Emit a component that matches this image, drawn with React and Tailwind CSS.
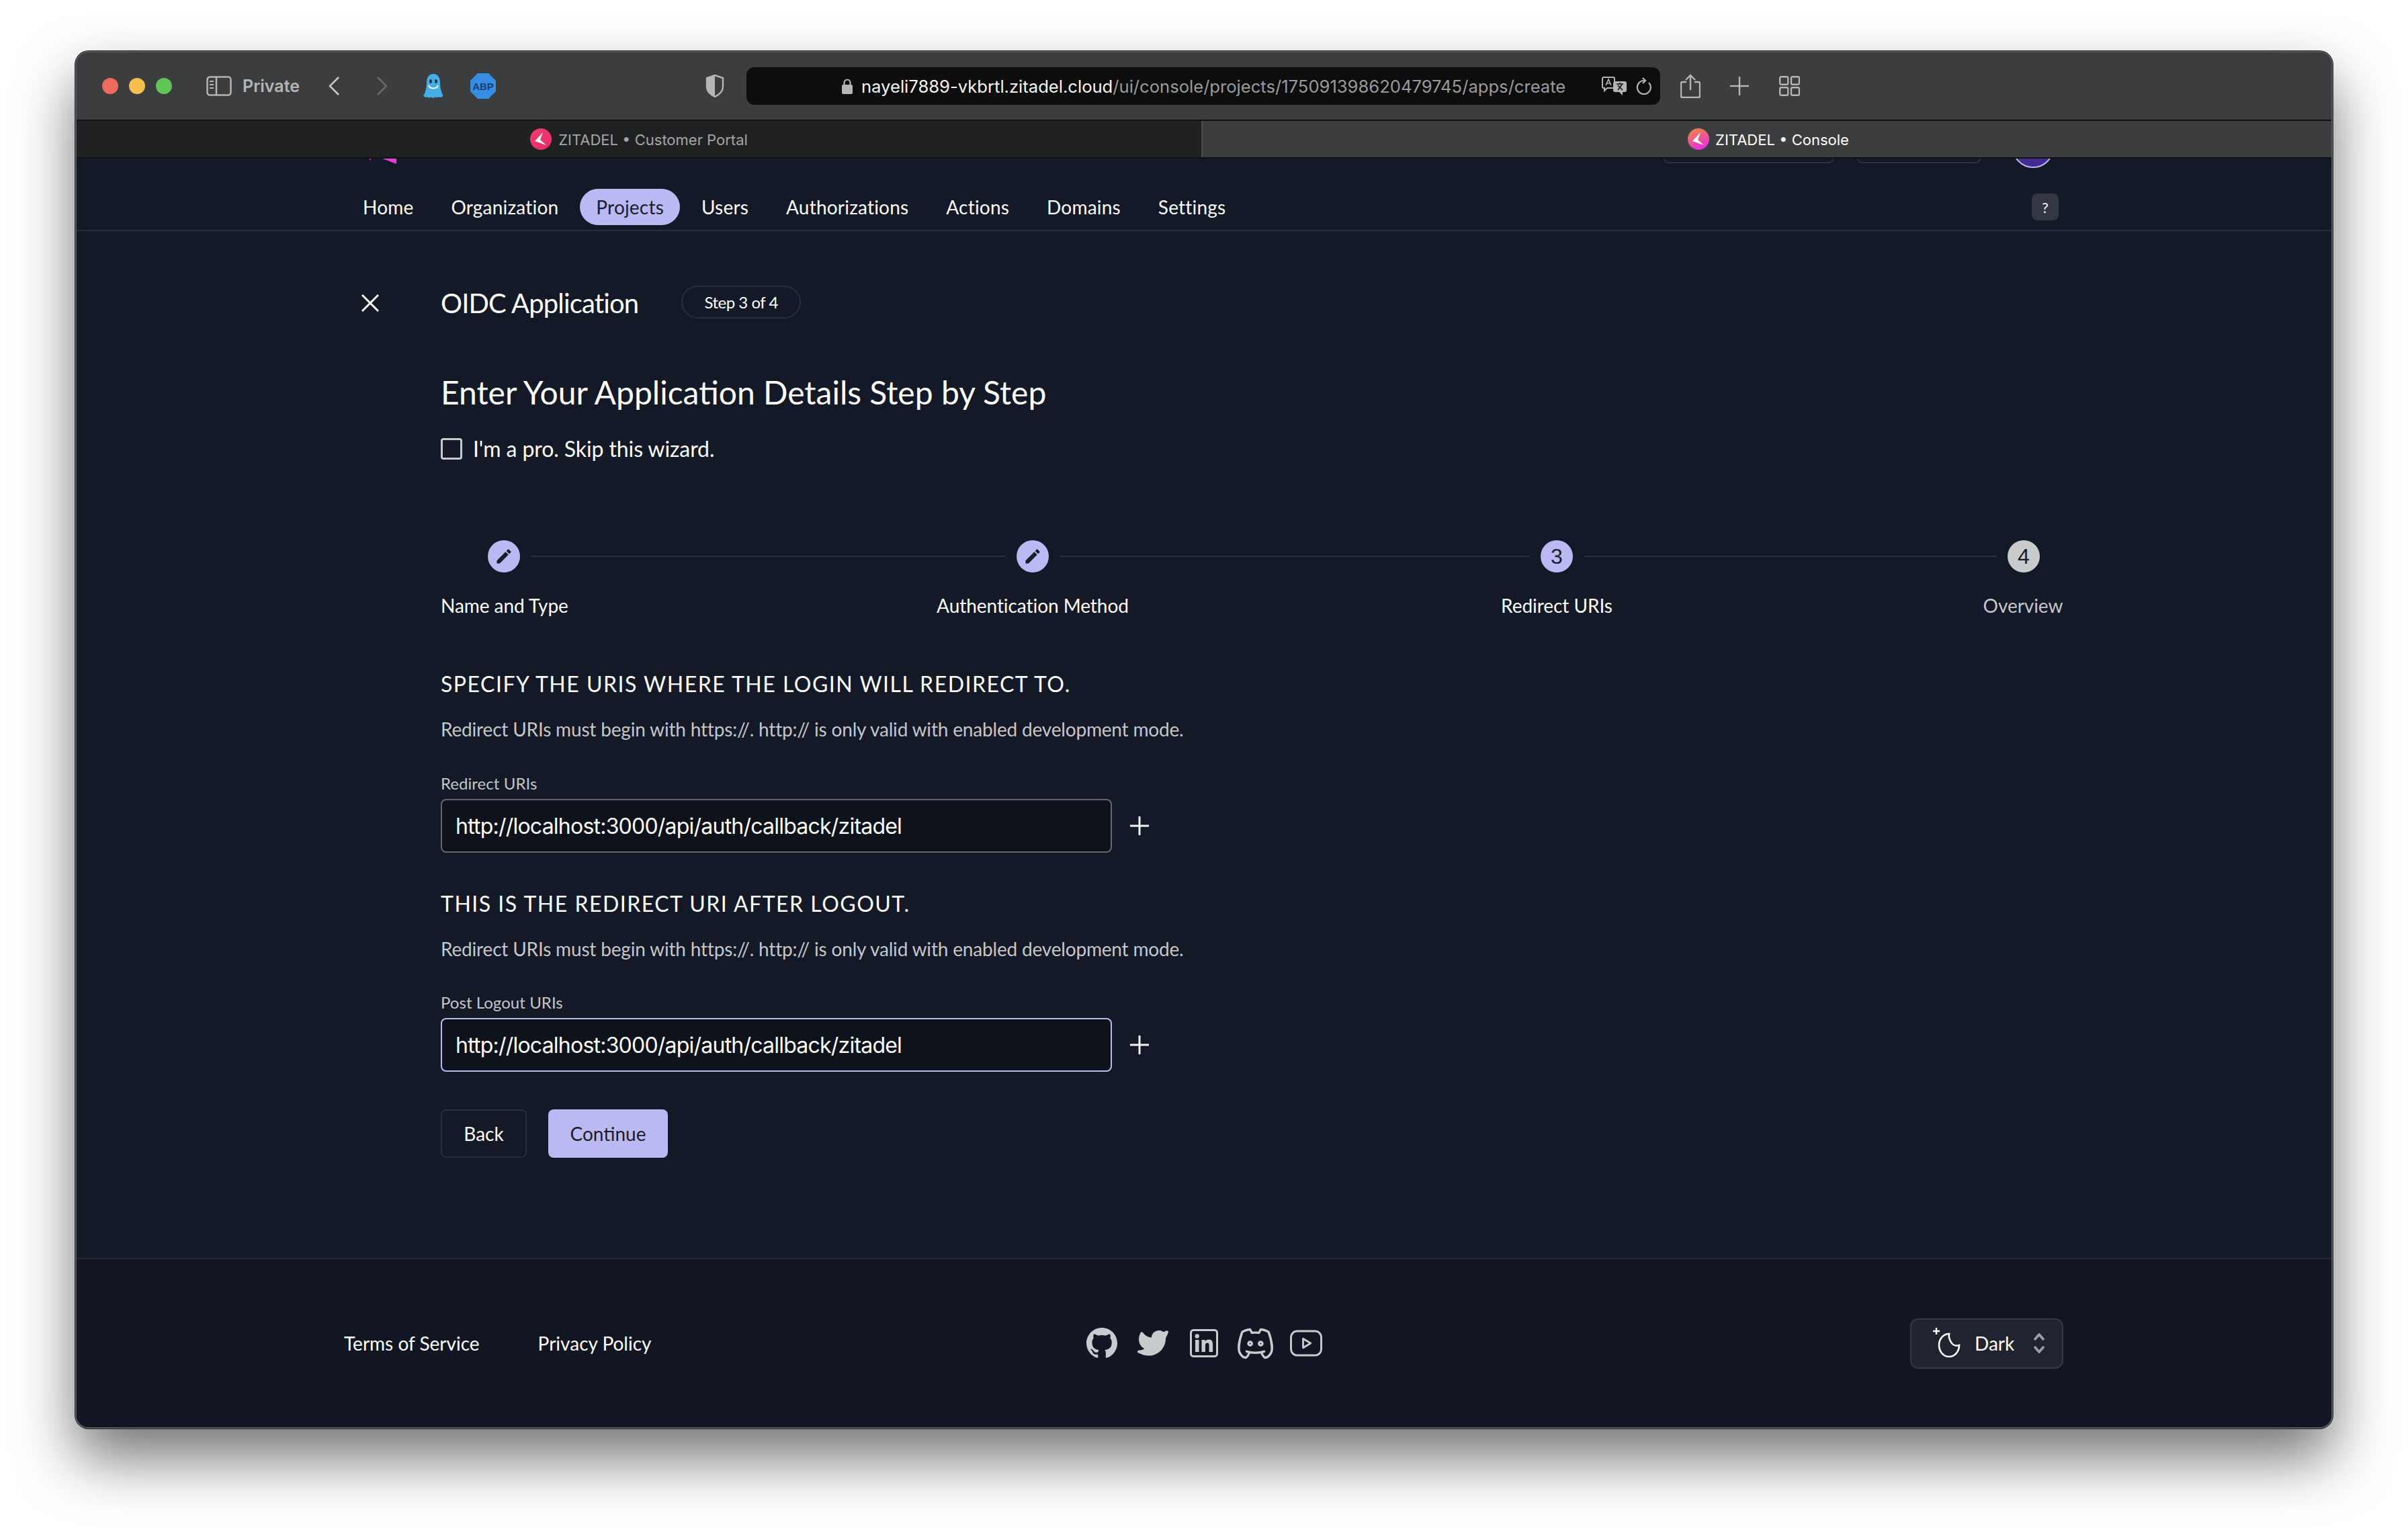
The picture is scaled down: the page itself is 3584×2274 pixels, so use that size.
import React from 'react';
import { TbBrandDiscord, TbBrandYoutube, TbBrandTwitterFilled } from 'react-icons/tb';
import { BsGithub } from 'react-icons/bs';

function ZLogo({ id, from, to }) {
  return (
    <svg width="32" height="32" viewBox="0 0 32 32" className="shrink-0">
      <defs>
        <linearGradient id={id} x1="0" y1="0" x2="0.4" y2="1">
          <stop offset="0" stopColor={from} />
          <stop offset="1" stopColor={to} />
        </linearGradient>
      </defs>
      <circle cx="16" cy="16" r="16" fill={`url(#${id})`} />
      <path d="M19 6 L7 19 L13 21 L24 25 L15 17 Z" fill="#fff" />
    </svg>
  );
}

function Pencil() {
  return (
    <svg width="28" height="28" viewBox="0 0 24 24" fill="#1b1e29">
      <path d="M3 17.25V21h3.75L17.81 9.94l-3.75-3.75L3 17.25zM20.71 7.04c.39-.39.39-1.02 0-1.41l-2.34-2.34c-.39-.39-1.02-.39-1.41 0l-1.83 1.83 3.75 3.75 1.83-1.83z" />
    </svg>
  );
}

function Circle({ children, muted }) {
  return (
    <div className={`w-12 h-12 shrink-0 rounded-full flex items-center justify-center text-[32px] leading-none text-[#1b1e29] font-['Liberation_Sans',sans-serif] ${muted ? 'bg-[#c9cacc]' : 'bg-[#bbb9f3]'}`}>
      {children}
    </div>
  );
}

function Plus() {
  return (
    <svg width="30" height="30" viewBox="0 0 30 30" className="ml-[26px] shrink-0" stroke="#f2f2f4" strokeWidth="3">
      <path d="M15 1v28M1 15h28" />
    </svg>
  );
}

function UriSection({ title, label, focused, titleMt, descMt, labelMt }) {
  return (
    <div>
      <h2 className={`text-[32px] leading-[40px] tracking-[1.5px] font-normal uppercase text-white ${titleMt}`}>{title}</h2>
      <p className={`text-[28px] leading-[36px] tracking-[-0.18px] text-[#c5c6c9] ${descMt}`}>
        Redirect URIs must begin with https://. http:// is only valid with enabled development mode.
      </p>
      <div className={`text-[24px] leading-[30px] tracking-[0.05px] text-[#c5c6c9] ${labelMt}`}>{label}</div>
      <div className="flex items-center mt-2">
        <div className={`w-[999px] h-[80px] rounded-lg border-2 bg-[#0e121b] flex items-center pl-[20px] pt-[2px] text-[32px] tracking-[-0.78px] text-white font-['Inter',sans-serif] ${focused ? 'border-[#bbb9f3]' : 'border-[#66676e]'}`}>
          http://localhost:3000/api/auth/callback/zitadel
        </div>
        <Plus />
      </div>
    </div>
  );
}

export default function App() {
  const nav = ['Home', 'Organization', 'Projects', 'Users', 'Authorizations', 'Actions', 'Domains', 'Settings'];
  return (
    <div className="w-[3584px] h-[2274px] bg-white pt-[76px] pl-[112px] overflow-hidden font-['Lato',sans-serif]">
      <div className="w-[3360px] h-[2050px] rounded-[20px] border-2 border-[#58595d] overflow-hidden flex flex-col bg-[#131927] shadow-[0_0_0_1px_#2a2a2c,0_44px_88px_rgba(0,0,0,0.55)]">
        {/* toolbar */}
        <div className="h-[102px] shrink-0 bg-[#3c3d3f] flex items-center border-b-2 border-b-[#111] font-['Inter',sans-serif]">
          <div className="flex gap-4 ml-[38px]">
            <span className="w-6 h-6 rounded-full bg-[#ed6a5f]" />
            <span className="w-6 h-6 rounded-full bg-[#f5bf4f]" />
            <span className="w-6 h-6 rounded-full bg-[#61c554]" />
          </div>
          <svg width="38" height="30" viewBox="0 0 38 30" fill="none" stroke="#b4b5b7" strokeWidth="2.5" className="ml-[51px]">
            <rect x="1.5" y="1.5" width="35" height="27" rx="4" />
            <path d="M15 1.5v27" />
            <path d="M5 8h6M5 13h6M5 18h6" strokeWidth="2" />
          </svg>
          <span className="ml-[16px] w-[89px] text-[25px] font-semibold text-[#b4b5b7] whitespace-nowrap mt-[2px]">Private</span>
          <svg width="18" height="30" viewBox="0 0 18 30" fill="none" stroke="#c4c5c7" strokeWidth="2.6" className="ml-[38px]">
            <path d="M16 2 3 15l13 13" />
          </svg>
          <svg width="18" height="30" viewBox="0 0 18 30" fill="none" stroke="#68696b" strokeWidth="2.6" className="ml-[54px]">
            <path d="M2 2l13 13L2 28" />
          </svg>
          <svg width="30" height="36" viewBox="0 0 30 36" className="ml-[52px]">
            <path d="M15 0C8 0 5 6 5 13c0 8-2 15-5 20 2 1 4 3 6 1 2 2 4 2 5 0 2 2 5 2 7 0 2 2 4 1 5 0 2 2 4 0 7-1-3-5-5-12-5-20C25 6 22 0 15 0z" fill="#44aee8" />
            <ellipse cx="11" cy="11" rx="1.8" ry="3" fill="#123" />
            <ellipse cx="19" cy="11" rx="1.8" ry="3" fill="#123" />
            <path d="M8 17c2 6 12 6 14 0" fill="none" stroke="#fff" strokeWidth="2" />
          </svg>
          <svg width="38" height="38" viewBox="0 0 38 38" className="ml-[40px]">
            <polygon points="11,0 27,0 38,11 38,27 27,38 11,38 0,27 0,11" fill="#378de4" />
            <text x="19" y="25" textAnchor="middle" fontSize="15" fontWeight="700" fill="#1c3f74" fontFamily="Liberation Sans">ABP</text>
          </svg>
          <svg width="28" height="34" viewBox="0 0 28 34" className="ml-[312px]">
            <path d="M14 1 2 5v13c0 7 6 12 12 15 6-3 12-8 12-15V5z" fill="none" stroke="#b4b5b7" strokeWidth="2.4" />
            <path d="M14 1 2 5v13c0 7 6 12 12 15z" fill="#b4b5b7" />
          </svg>
          <div className="ml-[33px] w-[1360px] h-[56px] rounded-[12px] bg-[#0d0d0e] flex items-center pl-[141px] shrink-0">
            <svg width="18" height="24" viewBox="0 0 18 24" className="shrink-0">
              <path d="M4.5 11V7a4.5 4.5 0 0 1 9 0v4" fill="none" stroke="#b4b5b7" strokeWidth="2.2" />
              <rect x="1" y="10" width="16" height="14" rx="2" fill="#b4b5b7" />
            </svg>
            <span className="ml-[12px] mt-[2px] text-[25.6px] text-[#f4f4f4] whitespace-nowrap">nayeli7889-vkbrtl.zitadel.cloud<span className="text-[#9a9b9d]">/ui/console/projects/175091398620479745/apps/create</span></span>
            <svg width="38" height="28" viewBox="0 0 38 28" className="ml-auto shrink-0">
              <path d="M3 1h14a2 2 0 0 1 2 2v12a2 2 0 0 1-2 2h-9l-4 4v-4H3a2 2 0 0 1-2-2V3a2 2 0 0 1 2-2z" fill="none" stroke="#b4b5b7" strokeWidth="2" />
              <rect x="17" y="7" width="20" height="16" rx="3" fill="#b4b5b7" />
              <path d="M31 23v5l-5-5z" fill="#b4b5b7" />
              <path d="M22 11h10M27 9v2M24 20l6-8M24 13l7 7" stroke="#111" strokeWidth="1.6" fill="none" />
              <path d="M6 13l4-9 4 9M7.5 10h5" stroke="#b4b5b7" strokeWidth="1.6" fill="none" />
            </svg>
            <svg width="24" height="26" viewBox="0 0 24 26" fill="none" stroke="#b4b5b7" strokeWidth="2.2" className="ml-[13px] mr-[12px] shrink-0">
              <path d="M19 8a10 10 0 1 1-7-3" />
              <path d="M10 1l4 4-4 4" />
            </svg>
          </div>
          <svg width="30" height="36" viewBox="0 0 30 36" fill="none" stroke="#b4b5b7" strokeWidth="2.4" className="ml-[30px]">
            <path d="M9 12H3a2 2 0 0 0-2 2v19a2 2 0 0 0 2 2h24a2 2 0 0 0 2-2V14a2 2 0 0 0-2-2h-6" />
            <path d="M15 24V2M8 9l7-7 7 7" />
          </svg>
          <svg width="28" height="28" viewBox="0 0 28 28" stroke="#b4b5b7" strokeWidth="2.4" className="ml-[44px]">
            <path d="M14 0v28M0 14h28" />
          </svg>
          <svg width="31" height="30" viewBox="0 0 31 30" fill="none" stroke="#b4b5b7" strokeWidth="2.4" className="ml-[45px]">
            <rect x="1.2" y="1.2" width="12" height="11.5" rx="2" />
            <rect x="18" y="1.2" width="12" height="11.5" rx="2" />
            <rect x="1.2" y="17.3" width="12" height="11.5" rx="2" />
            <rect x="18" y="17.3" width="12" height="11.5" rx="2" />
          </svg>
        </div>
        {/* tabs */}
        <div className="h-[56px] shrink-0 flex bg-[#3c3d3f] border-b-2 border-b-[#111] font-['Inter',sans-serif] text-[22px]">
          <div className="w-[1676px] bg-[#202122] border-r-2 border-r-[#4a4b4d] flex items-center justify-center gap-[10px] text-[#a4a5a7]">
            <ZLogo id="za" from="#ee3b6a" to="#e8316b" />
            <span className="whitespace-nowrap mt-[2px]">ZITADEL • Customer Portal</span>
          </div>
          <div className="flex-1 flex items-center justify-center gap-[9px] pl-[4px] text-white">
            <ZLogo id="zb" from="#f58b2e" to="#e734d8" />
            <span className="whitespace-nowrap mt-[2px]">ZITADEL • Console</span>
          </div>
        </div>
        {/* header */}
        <div className="h-[108px] shrink-0 border-b-2 border-b-[#2a2e3a]">
          <div className="h-[14px] flex items-start overflow-hidden">
            <svg width="42" height="8" viewBox="0 0 42 8" className="ml-[436px]">
              <path d="M0 0h2L1 4zM19 0h21v8z" fill="#e63adb" />
            </svg>
            <div className="ml-[1884px] w-[253px] h-[7px] rounded-b-[8px] border-2 border-t-0 border-[#2e3240]" />
            <div className="ml-[35px] w-[184px] h-[7px] rounded-b-[8px] border-2 border-t-0 border-[#2e3240]" />
            <div className="ml-[47px] -mt-[48px] w-[62px] h-[62px] shrink-0 rounded-full bg-[#452a91] border-2 border-[#b9b7f0]" />
          </div>
          <div className="flex items-center mt-[31px] pl-[402px] gap-2 text-[28px] tracking-[0.2px]">
            {nav.map((n) => (
              <div key={n} className={`h-[54px] px-6 rounded-[27px] flex items-center ${n === 'Projects' ? 'bg-[#bbb9f3] text-[#1b1e29]' : 'text-white'}`}>{n}</div>
            ))}
            <div className="ml-auto mr-[406px] w-10 h-10 rounded-lg bg-[#333743] flex items-center justify-center text-[22px] text-white">?</div>
          </div>
        </div>
        {/* main */}
        <main className="flex-1 pt-[81px] text-white">
          <div className="flex items-center pl-[424px] h-[49px]">
            <svg width="26" height="26" viewBox="0 0 26 26" stroke="#fff" strokeWidth="3" className="shrink-0 mt-[2px]">
              <path d="M1 1l24 24M25 1 1 25" />
            </svg>
            <h1 className="ml-[92px] mt-[2px] text-[40px] font-normal leading-none tracking-[-0.85px] whitespace-nowrap">OIDC Application</h1>
            <div className="ml-[64px] w-[178px] h-[49px] rounded-full border-2 border-[#2a2e3a] flex items-center justify-center text-[24px] tracking-[-0.5px]">Step 3 of 4</div>
          </div>
          <div className="pl-[542px]">
            <h2 className="mt-[80px] text-[48px] leading-[60px] font-normal">Enter Your Application Details Step by Step</h2>
            <div className="mt-[38px] h-8 flex items-center">
              <div className="w-8 h-8 rounded border-[3px] border-[#c9cacc]" />
              <span className="ml-4 text-[32px] tracking-[-0.1px]">I'm a pro. Skip this wizard.</span>
            </div>
            <div className="mt-[120px] w-[2416px]">
              <div className="flex items-center pl-[70px]">
                <Circle><Pencil /></Circle>
                <div className="mx-4 w-[707px] h-[2px] bg-[#2a2e3a]" />
                <Circle><Pencil /></Circle>
                <div className="mx-4 w-[700px] h-[2px] bg-[#2a2e3a]" />
                <Circle>3</Circle>
                <div className="mx-4 w-[615px] h-[2px] bg-[#2a2e3a]" />
                <Circle muted>4</Circle>
              </div>
              <div className="mt-[29px] flex text-[28px] leading-[40px] whitespace-nowrap tracking-[-0.05px]">
                <span className="w-[188px] text-center">Name and Type</span>
                <span className="ml-[493px] w-[400px] text-center">Authentication Method</span>
                <span className="ml-[380px] w-[400px] text-center">Redirect URIs</span>
                <span className="ml-[433px] w-[122px] text-center text-[#c5c6c9]">Overview</span>
              </div>
            </div>
            <UriSection title="Specify the URIs where the login will redirect to." label="Redirect URIs" titleMt="mt-[77px]" descMt="mt-[29px]" labelMt="mt-[48px]" />
            <UriSection title="This is the redirect URI after logout." label="Post Logout URIs" focused titleMt="mt-[56px]" descMt="mt-[29px]" labelMt="mt-[47px]" />
            <div className="mt-[56px] flex gap-8 text-[28px]">
              <div className="w-[128px] h-[72px] rounded-lg border-2 border-[#2a2e3a] flex items-center justify-center">Back</div>
              <div className="w-[178px] h-[72px] rounded-lg bg-[#bbb9f3] text-[#1b1e29] flex items-center justify-center">Continue</div>
            </div>
          </div>
        </main>
        {/* footer */}
        <footer className="h-[252px] shrink-0 bg-[#111622] border-t-2 border-t-[#262a36] flex items-center text-[28px] text-[#dfe0e2]">
          <div className="ml-[398px] w-[1090px] flex">
            <span className="text-white">Terms of Service</span>
            <span className="ml-[87px] text-white">Privacy Policy</span>
          </div>
          <div className="flex items-center text-[#c9cacc]">
            <div className="w-[76px] flex justify-center"><BsGithub size={46} /></div>
            <div className="w-[76px] flex justify-center"><TbBrandTwitterFilled size={50} /></div>
            <div className="w-[76px] flex justify-center">
              <svg width="42" height="42" viewBox="0 0 42 42" fill="none">
                <rect x="1.5" y="1.5" width="39" height="39" rx="4" stroke="#c9cacc" strokeWidth="3" />
                <rect x="8" y="16" width="5.5" height="18" fill="#c9cacc" />
                <circle cx="10.7" cy="10.5" r="3.2" fill="#c9cacc" />
                <path d="M17.5 16h5.2v2.6c1-1.8 3-3 5.4-3 4.6 0 6 3 6 7.5V34h-5.5v-9.6c0-2.4-.6-4-2.7-4-2.3 0-3 1.7-3 4V34h-5.4z" fill="#c9cacc" />
              </svg>
            </div>
            <div className="w-[76px] flex justify-center"><TbBrandDiscord size={63} strokeWidth={1.3} /></div>
            <div className="w-[76px] flex justify-center"><TbBrandYoutube size={54} strokeWidth={1.3} /></div>
          </div>
          <div className="ml-auto mr-[399px] w-[228px] h-[75px] rounded-[12px] bg-[#1f2430] border-2 border-[#343844] flex items-center text-white">
            <svg width="42" height="48" viewBox="0 0 42 48" fill="none" className="ml-[32px] shrink-0" stroke="#fff" strokeWidth="2.6">
              <path d="M5 1v10M0 6h10" strokeWidth="2.4" />
              <path d="M24 10a15 17 0 1 0 15 17c-3 1-8 1-11-3s-5-8-4-14z" />
            </svg>
            <span className="ml-[20px]">Dark</span>
            <svg width="18" height="30" viewBox="0 0 18 30" fill="none" stroke="#9c9ea4" strokeWidth="3.6" className="ml-[28px] shrink-0">
              <path d="M2 10 9 2l7 8M2 20l7 8 7-8" />
            </svg>
          </div>
        </footer>
      </div>
    </div>
  );
}
